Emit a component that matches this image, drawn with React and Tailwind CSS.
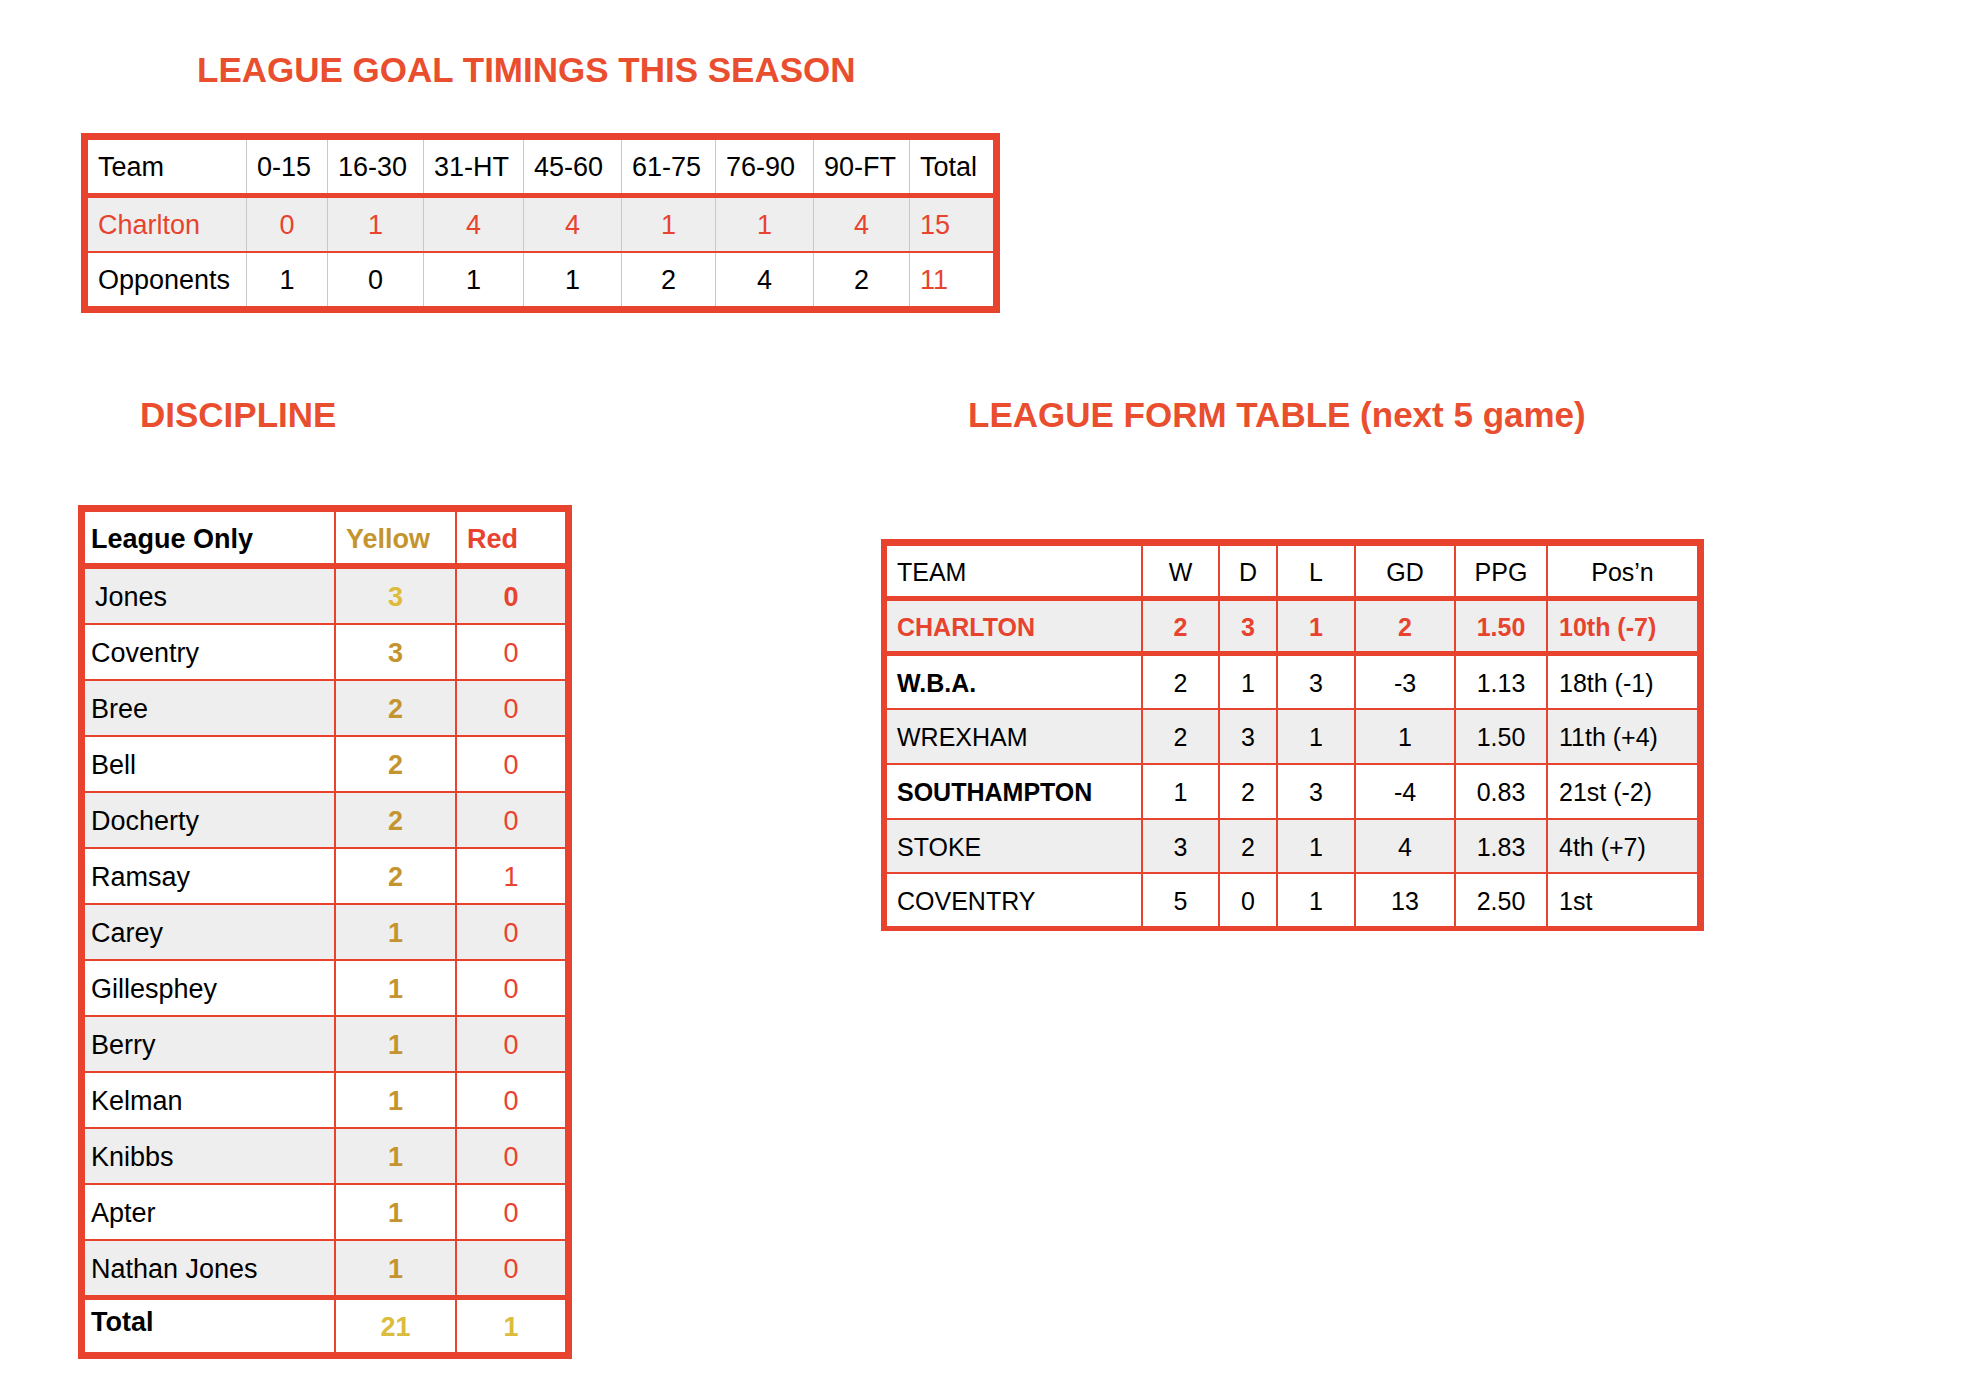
const RED = 'border-[#e8432f]';

const timingHead = ['Team', '0-15', '16-30', '31-HT', '45-60', '61-75', '76-90', '90-FT', 'Total'];
const charlton = ['Charlton', '0', '1', '4', '4', '1', '1', '4', '15'];
const opponents = ['Opponents', '1', '0', '1', '1', '2', '4', '2', '11'];

const discipline = [
    ['Jones', '3', '0'],
    ['Coventry', '3', '0'],
    ['Bree', '2', '0'],
    ['Bell', '2', '0'],
    ['Docherty', '2', '0'],
    ['Ramsay', '2', '1'],
    ['Carey', '1', '0'],
    ['Gillesphey', '1', '0'],
    ['Berry', '1', '0'],
    ['Kelman', '1', '0'],
    ['Knibbs', '1', '0'],
    ['Apter', '1', '0'],
    ['Nathan Jones', '1', '0'],
];

const formRows = [
    { team: 'W.B.A.', bold: true, vals: ['2', '1', '3', '-3', '1.13'], pos: '18th (-1)', h: 'h-[57px] border-t-[5px]' },
    { team: 'WREXHAM', bold: false, vals: ['2', '3', '1', '1', '1.50'], pos: '11th (+4)', h: 'h-[55px] border-t-2' },
    { team: 'SOUTHAMPTON', bold: true, vals: ['1', '2', '3', '-4', '0.83'], pos: '21st (-2)', h: 'h-[55px] border-t-2' },
    { team: 'STOKE', bold: false, vals: ['3', '2', '1', '4', '1.83'], pos: '4th (+7)', h: 'h-[54px] border-t-2' },
    { team: 'COVENTRY', bold: false, vals: ['5', '0', '1', '13', '2.50'], pos: '1st', h: 'h-[54px] border-t-2' },
];

const Title = ({ children, className = '' }) => (
    <h2 className={`text-[35px] leading-[35px] font-bold text-[#e94e2f] ${className}`}>{children}</h2>
);

const timingGrid = 'grid grid-cols-[158px_81px_96px_100px_98px_94px_98px_96px_84px]';

const TimingRow = ({ cells, className, header, red }) => (
    <div className={`${timingGrid} ${className}`}>
        {cells.map((c, i) => {
            const align =
                header || i === 0 || i === 8 ? 'justify-start pl-[10px]' : 'justify-center';
            const color = red || i === 8 ? (header ? 'text-black' : 'text-[#e8432f]') : 'text-black';
            return (
                <div
                    key={i}
                    className={`flex items-center pt-[2px] ${align} ${color} ${i > 0 ? 'border-l border-[#c8c8c8]' : 'pl-[9px]'}`}
                >
                    {c}
                </div>
            );
        })}
    </div>
);

const GoalTimings = () => (
    <div className={`w-[919px] border-[7px] ${RED} text-[27px]`}>
        <TimingRow cells={timingHead} header className="h-[53px] bg-white" />
        <TimingRow cells={charlton} red className={`h-[58px] border-t-[5px] ${RED} bg-[#eeeeee]`} />
        <TimingRow cells={opponents} className={`h-[55px] border-t-2 ${RED} bg-white`} />
    </div>
);

const discGrid = 'grid grid-cols-[249px_121px_110px]';

const Discipline = () => (
    <div className={`w-[494px] border-[7px] ${RED} text-[27px]`}>
        <div className={`${discGrid} h-[51px] bg-white font-bold`}>
            <div className="flex items-center pt-[3px] pl-[6px] text-black">League Only</div>
            <div className={`flex items-center pt-[3px] pl-[10px] border-l-2 ${RED} text-[#c4952e]`}>Yellow</div>
            <div className={`flex items-center pt-[3px] pl-[10px] border-l-2 ${RED} text-[#e8432f]`}>Red</div>
        </div>
        {discipline.map(([name, y, r], i) => (
            <div
                key={name}
                className={`${discGrid} ${i === 0 ? 'h-[60px] border-t-[6px]' : 'h-[56px] border-t-2'} ${RED} ${
                    i % 2 === 0 ? 'bg-[#eeeeee]' : 'bg-white'
                }`}
            >
                <div className={`flex items-center pt-[2px] ${i === 0 ? 'pl-[10px]' : 'pl-[6px]'} text-black`}>
                    {name}
                </div>
                <div
                    className={`flex items-center justify-center pt-[2px] border-l-2 ${RED} font-bold ${
                        i === 0 ? 'text-[#dfbb3a]' : 'text-[#c4952e]'
                    }`}
                >
                    {y}
                </div>
                <div
                    className={`flex items-center justify-center pt-[2px] border-l-2 ${RED} text-[#e8432f] ${
                        i === 0 ? 'font-bold' : ''
                    }`}
                >
                    {r}
                </div>
            </div>
        ))}
        <div className={`${discGrid} h-[57px] border-t-[5px] ${RED} bg-white font-bold`}>
            <div className="pl-[6px] pt-[2px] text-black">Total</div>
            <div className={`flex items-center justify-center pt-[3px] border-l-2 ${RED} text-[#dcbc3c]`}>21</div>
            <div className={`flex items-center justify-center pt-[3px] border-l-2 ${RED} text-[#dcbc3c]`}>1</div>
        </div>
    </div>
);

const formGrid = 'grid grid-cols-[254px_77px_58px_78px_100px_92px_151px]';

const FormTable = () => (
    <div
        className={`w-[823px] border-t-[7px] border-r-[7px] border-b-[5px] border-l-[6px] ${RED} text-[25px]`}
    >
        <div className={`${formGrid} h-[50px] bg-white text-black`}>
            <div className="flex items-center pt-[3px] pl-[10px]">TEAM</div>
            {['W', 'D', 'L', 'GD', 'PPG', 'Pos’n'].map((h) => (
                <div key={h} className={`flex items-center justify-center pt-[3px] border-l-2 ${RED}`}>
                    {h}
                </div>
            ))}
        </div>
        <div className={`${formGrid} h-[55px] border-t-[5px] ${RED} bg-[#eeeeee] text-[#e8432f] font-bold`}>
            <div className="flex items-center pt-[3px] pl-[10px]">CHARLTON</div>
            {['2', '3', '1', '2', '1.50'].map((v, i) => (
                <div key={i} className={`flex items-center justify-center pt-[3px] border-l-2 ${RED}`}>
                    {v}
                </div>
            ))}
            <div className={`flex items-center pt-[3px] pl-[11px] border-l-2 ${RED}`}>10th (-7)</div>
        </div>
        {formRows.map((row, i) => (
            <div
                key={row.team}
                className={`${formGrid} ${row.h} ${RED} ${i % 2 === 1 ? 'bg-[#eeeeee]' : 'bg-white'} text-black`}
            >
                <div className={`flex items-center pt-[3px] pl-[10px] ${row.bold ? 'font-bold' : ''}`}>
                    {row.team}
                </div>
                {row.vals.map((v, j) => (
                    <div key={j} className={`flex items-center justify-center pt-[3px] border-l-2 ${RED}`}>
                        {v}
                    </div>
                ))}
                <div className={`flex items-center pt-[3px] pl-[11px] border-l-2 ${RED}`}>{row.pos}</div>
            </div>
        ))}
    </div>
);

const App = () => {
    return (
        <div className="min-h-screen bg-white pt-[52px] font-['Liberation_Sans',Arial,sans-serif]">
            <Title className="pl-[197px]">LEAGUE GOAL TIMINGS THIS SEASON</Title>

            <div className="ml-[81px] mt-[46px]">
                <GoalTimings />
            </div>

            <div className="flex items-start mt-[84px]">
                <div className="ml-[78px] w-[494px]">
                    <Title className="pl-[62px]">DISCIPLINE</Title>
                    <div className="mt-[73px]">
                        <Discipline />
                    </div>
                </div>

                <div className="ml-[309px]">
                    <Title className="pl-[87px]">LEAGUE FORM TABLE (next 5 game)</Title>
                    <div className="mt-[107px]">
                        <FormTable />
                    </div>
                </div>
            </div>
        </div>
    );
};

export default App;
